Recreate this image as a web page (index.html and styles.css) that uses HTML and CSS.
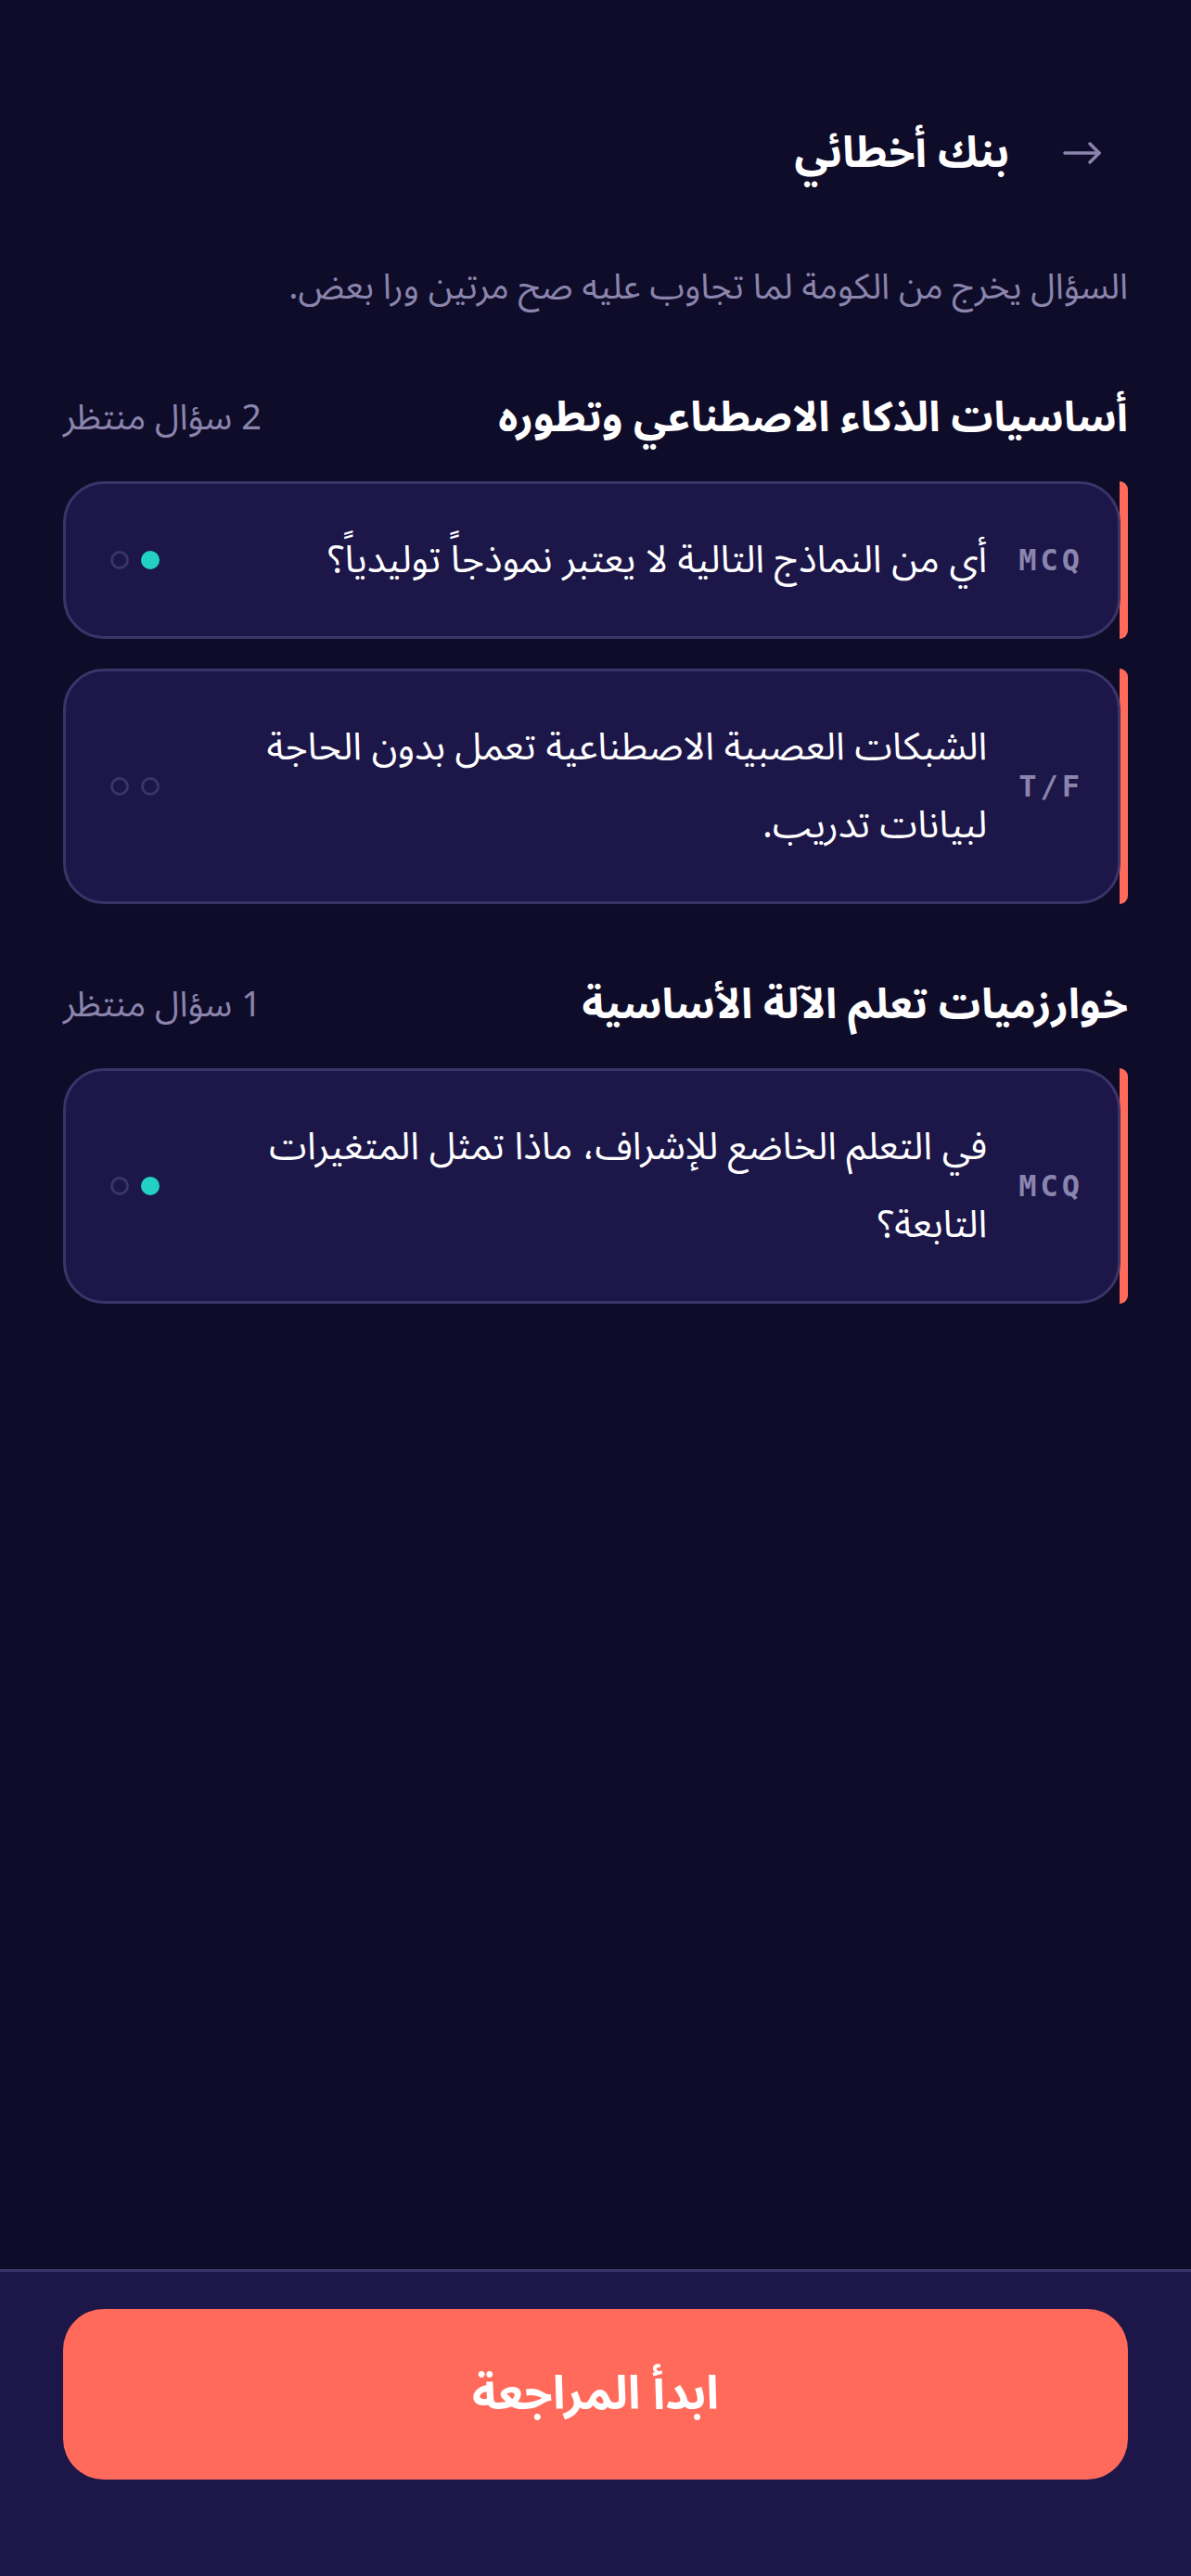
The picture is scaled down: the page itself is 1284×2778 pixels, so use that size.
FILE: index.html
```html
<!DOCTYPE html>
<html lang="ar" dir="rtl">
<head>
    <meta charset="UTF-8">
    <meta name="viewport" content="width=device-width, initial-scale=1.0">
    <title>بنك أخطائي</title>
    <link rel="stylesheet" href="styles.css">
</head>
<body>

    <main class="page">
        <header class="top-bar">
            <button class="back-btn" aria-label="رجوع">
                <svg width="42" height="24" viewBox="0 0 42 24" fill="none" stroke="currentColor" stroke-width="3.5" stroke-linecap="round" stroke-linejoin="round">
                    <path d="M2 12h37"/>
                    <path d="M29 2l10 10-10 10"/>
                </svg>
            </button>
            <h1>بنك أخطائي</h1>
        </header>

        <p class="intro">السؤال يخرج من الكومة لما تجاوب عليه صح مرتين ورا بعض.</p>

        <!-- Section 1 -->
        <section class="group">
            <div class="group-head">
                <h2>أساسيات الذكاء الاصطناعي وتطوره</h2>
                <span class="pending">2 سؤال منتظر</span>
            </div>

            <div class="q-row">
                <div class="q-card">
                    <span class="q-type">MCQ</span>
                    <p class="q-text">أي من النماذج التالية لا يعتبر نموذجاً توليدياً؟</p>
                    <div class="streak">
                        <span class="dot on"></span>
                        <span class="dot"></span>
                    </div>
                </div>
            </div>

            <div class="q-row">
                <div class="q-card">
                    <span class="q-type">T/F</span>
                    <p class="q-text">الشبكات العصبية الاصطناعية تعمل بدون الحاجة لبيانات تدريب.</p>
                    <div class="streak">
                        <span class="dot"></span>
                        <span class="dot"></span>
                    </div>
                </div>
            </div>
        </section>

        <!-- Section 2 -->
        <section class="group">
            <div class="group-head">
                <h2>خوارزميات تعلم الآلة الأساسية</h2>
                <span class="pending">1 سؤال منتظر</span>
            </div>

            <div class="q-row">
                <div class="q-card">
                    <span class="q-type">MCQ</span>
                    <p class="q-text">في التعلم الخاضع للإشراف، ماذا تمثل المتغيرات التابعة؟</p>
                    <div class="streak">
                        <span class="dot on"></span>
                        <span class="dot"></span>
                    </div>
                </div>
            </div>
        </section>
    </main>

    <footer class="bottom-bar">
        <button class="start-btn">ابدأ المراجعة</button>
    </footer>

</body>
</html>
```

FILE: styles.css
```css
* {
    box-sizing: border-box;
}
body {
    font-family: "Noto Sans Arabic", "Noto Sans", "DejaVu Sans", sans-serif;
    background-color: #0f0c29;
    color: #ffffff;
    margin: 0;
    padding: 0;
    min-height: 100vh;
    display: flex;
    flex-direction: column;
}
.page {
    flex: 1;
    padding: 110px 68px 40px;
}
.top-bar {
    display: flex;
    align-items: center;
    gap: 58px;
    height: 110px;
}
.back-btn {
    background: none;
    border: none;
    padding: 0 28px 0 0;
    color: #8b85ad;
    display: flex;
    align-items: center;
    cursor: pointer;
}
h1 {
    margin: 0;
    font-size: 46px;
    font-weight: 700;
}
.intro {
    margin: 0;
    margin-top: 60px;
    font-size: 38px;
    color: #8b85ad;
    line-height: 1.6;
}
.group {
    margin-top: 70px;
}
.group + .group {
    margin-top: 69px;
}
.group-head {
    display: flex;
    justify-content: space-between;
    align-items: center;
    margin-bottom: 28px;
}
h2 {
    margin: 0;
    font-size: 45px;
    font-weight: 700;
    line-height: 1.3;
}
.pending {
    font-size: 38px;
    color: #8b85ad;
}
.q-row {
    display: flex;
    margin-bottom: 32px;
}
/* coral strip on the start (right) side */
.q-row::before {
    content: '';
    width: 9px;
    background: #ff6a5a;
    border-radius: 0 10px 10px 0;
    margin-left: -1px;
}
.q-card {
    flex: 1;
    display: flex;
    align-items: center;
    gap: 34px;
    background: #1c1649;
    border: 3px solid #3a3468;
    border-radius: 44px;
    padding: 40px 37px 40px 48px;
}
.q-type {
    font-family: "DejaVu Sans Mono", "Liberation Mono", monospace;
    font-weight: 700;
    font-size: 32px;
    letter-spacing: 4px;
    color: #8b85ad;
    direction: ltr;
}
.q-text {
    flex: 1;
    margin: 0;
    font-size: 41px;
    line-height: 84px;
}
.streak {
    display: flex;
    gap: 13px;
}
.dot {
    width: 20px;
    height: 20px;
    border-radius: 50%;
    border: 3px solid #3a3468;
}
.dot.on {
    background: #22d1c2;
    border-color: #22d1c2;
}
.bottom-bar {
    background: #1c1649;
    border-top: 3px solid #3a3468;
    padding: 40px 68px 104px;
}
.start-btn {
    width: 100%;
    height: 184px;
    border: none;
    border-radius: 44px;
    background: #ff6a5a;
    color: #ffffff;
    font-family: inherit;
    font-size: 50px;
    font-weight: 700;
    cursor: pointer;
}
```
